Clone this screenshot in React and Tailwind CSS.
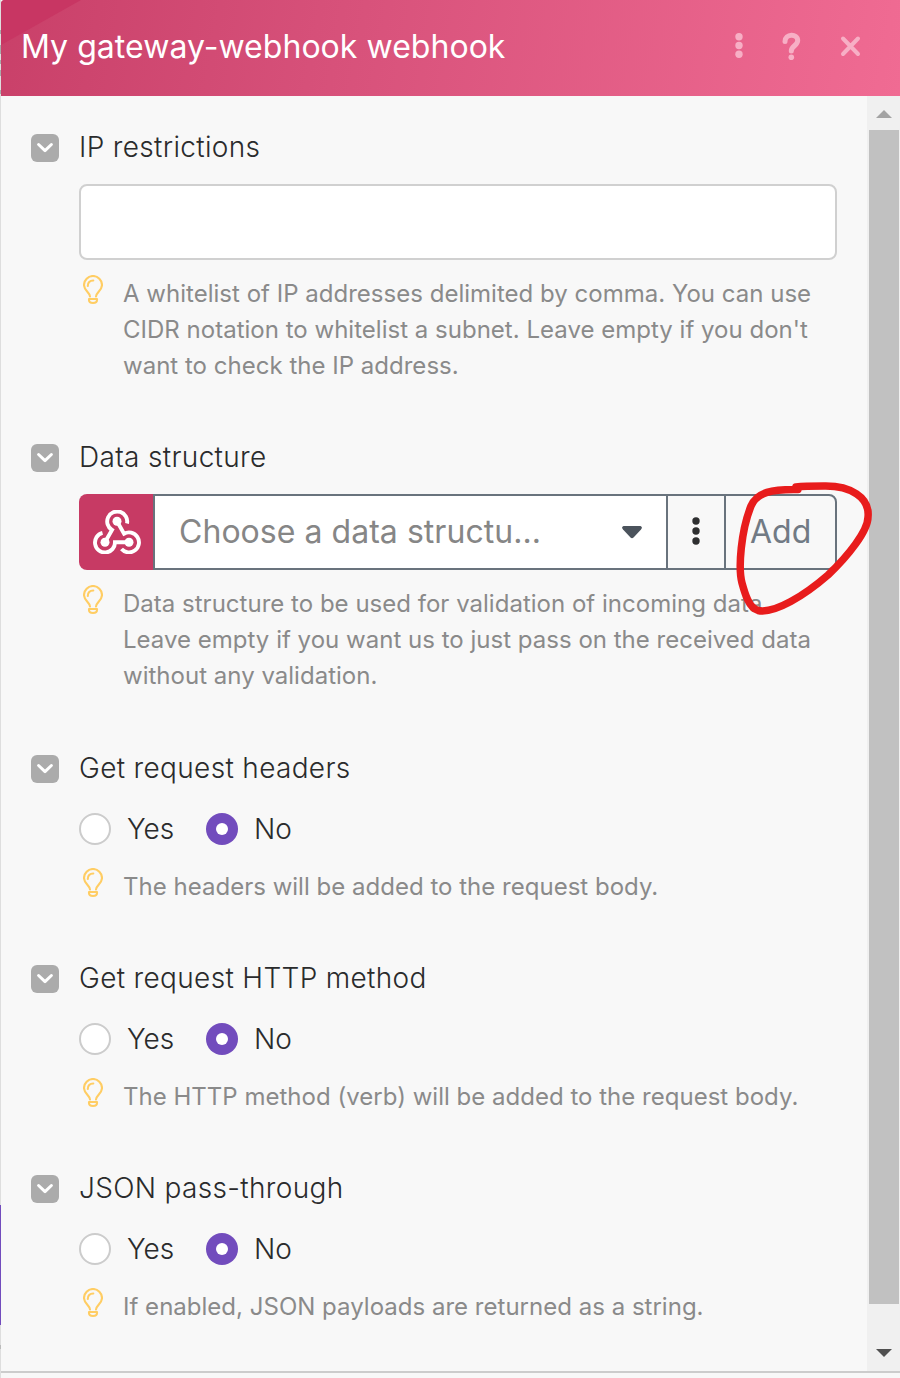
const Bulb = () => (
  <svg className="mt-[-1px] ml-[4px] mr-5 shrink-0" width="20" height="30" viewBox="0 0 20 30" fill="none" stroke="#ffcd63" strokeWidth="2.100">
    <path d="M7 21.500C6.500 17 1 15.500 1 10a9 9 0 0 1 18 0c0 5.500-5.500 7-6 11.500" strokeLinecap="round" />
    <path d="M4.800 11C4.600 7.500 6.800 5.500 10.300 5.500" strokeLinecap="round" />
    <path d="M6 24h8v1c0 4-8 4-8 0z" strokeLinejoin="round" />
  </svg>
);

const Toggle = () => (
  <button className="flex h-7 w-7 shrink-0 items-center justify-center rounded-[6px] bg-[#ababab]" aria-label="Toggle">
    <svg width="28" height="28" viewBox="0 0 28 28" fill="none" stroke="#fff" strokeWidth="3" strokeLinecap="round" strokeLinejoin="round">
      <path d="M7.600 10.500 14 16.600 20.400 10.500" />
    </svg>
  </button>
);

const Section = ({ title, className, children }) => (
  <section className={className}>
    <div className="flex h-[42px] items-center">
      <div className="mt-0.5 flex"><Toggle /></div>
      <h2 className="ml-5 text-[28px] leading-[42px] font-light tracking-[0.33px] text-[#2a2b2c]">{title}</h2>
    </div>
    <div className="ml-12">{children}</div>
  </section>
);

const Help = ({ lines }) => (
  <div className="flex">
    <Bulb />
    <p className="text-[24px] leading-9 tracking-[0.015px] whitespace-nowrap text-[#8a8a8a]">
      {lines.map((line) => (
        <span key={line} className="block">{line}</span>
      ))}
    </p>
  </div>
);

const YesNo = () => (
  <div className="flex h-8 items-center text-[28px] font-light text-[#2a2b2c]">
    <span className="h-8 w-8 rounded-full border-2 border-[#cccccc] bg-white" />
    <span className="ml-4 w-[79px]">Yes</span>
    <span className="flex h-8 w-8 items-center justify-center rounded-full bg-[#724cbd]">
      <span className="h-3 w-3 rounded-full bg-white" />
    </span>
    <span className="ml-4">No</span>
  </div>
);

const Hook = () => (
  <svg width="48" height="44" viewBox="0 0 48 44" fill="none" stroke="#fff" strokeWidth="3.900">
    <path d="M34 13.500A10 10 0 1 0 19 20L12 32.300" />
    <path d="M9.500 22.800A10 10 0 1 0 22 32.300H36" />
    <path d="M28.500 39A10 10 0 1 0 31 23.700L24 11.300" />
    <circle cx="24" cy="11.300" r="4.500" fill="#fff" stroke="none" />
    <circle cx="12" cy="32.300" r="4.500" fill="#fff" stroke="none" />
    <circle cx="36" cy="32.300" r="4.500" fill="#fff" stroke="none" />
  </svg>
);

export default function App() {
  return (
    <div className="relative flex h-[1378px] w-[900px] flex-col overflow-hidden bg-[#f8f8f8] font-['Inter',sans-serif]">
      <div className="flex min-h-0 flex-1">
        <div className="flex w-px shrink-0 flex-col bg-[#dedede]">
          <div className="mt-[30px] h-[4px] bg-[#aaaaaa]" />
          <div className="mt-[11px] h-[9px] bg-[#aaaaaa]" />
          <div className="mt-[6px] h-[4px] bg-[#aaaaaa]" />
          <div className="mt-[6px] h-[6px] bg-[#aaaaaa]" />
          <div className="mt-[14px] h-[4px] bg-[#aaaaaa]" />
          <div className="mt-[1111px] h-[120px] bg-[#724cbd]" />
          <div className="mt-[20px] h-[4px] bg-[#bbbbbb]" />
        </div>
        <div className="flex min-w-0 flex-1 flex-col">
          <header className="relative flex h-24 shrink-0 items-center overflow-hidden rounded-tl-[4px] bg-linear-[100deg,#c94069_0%,#d65079_35%,#f06b93_100%] pl-5">
            <svg className="absolute top-0 left-0" width="80" height="45" viewBox="0 0 80 45">
              <path d="M0 0H80L0 45Z" fill="#c83663" />
            </svg>
            <h1 className="relative -mt-[3px] text-[32px] tracking-[0.04px] whitespace-nowrap text-white">My gateway-webhook webhook</h1>
            <svg className="absolute top-[30px] right-9" width="130" height="34" viewBox="0 0 130 34" fill="none" stroke="#f7afc5" strokeLinecap="round">
              <g fill="#f7afc5" stroke="none">
                <circle cx="5" cy="6.700" r="3.700" />
                <circle cx="5" cy="15.500" r="3.700" />
                <circle cx="5" cy="24.200" r="3.700" />
                <circle cx="57.300" cy="27.200" r="2.800" />
              </g>
              <path d="M51 11.500C51 3.500 63.700 3.200 63.700 10.500C63.700 15.500 57.300 16 57.300 21" strokeWidth="5" />
              <path d="M109 8.500 124 24M124 8.500 109 24" strokeWidth="4" />
            </svg>
          </header>
          <div className="flex min-h-0 flex-1">
            <main className="w-[866px] pt-[30px] pl-[30px]">
              <Section title="IP restrictions" className="h-[310px]">
                <div className="mt-4 mb-4 h-[76px] w-[758px] rounded-[8px] border-2 border-[#d0d0d0] bg-white" />
                <Help lines={["A whitelist of IP addresses delimited by comma. You can use", "CIDR notation to whitelist a subnet. Leave empty if you don't", "want to check the IP address."]} />
              </Section>
              <Section title="Data structure" className="h-[311px]">
                <div className="mt-4 mb-4 flex h-[76px] w-[758px]">
                  <div className="flex w-[74px] items-center justify-center rounded-l-[8px] bg-[#c73a64] pl-0.5"><Hook /></div>
                  <div className="flex w-[515px] items-center border-2 border-[#69737d] bg-white pl-6 text-[32px] tracking-[0.04px] text-[#868686]">
                    <span className="w-[443px]">Choose a data structu...</span>
                    <svg width="20" height="13" viewBox="0 0 20 13"><path d="M1.500 0H18.500Q21 1 19 3.500L11.500 11.500Q10 13 8.500 11.500L1 3.500Q-1 1 1.500 0Z" fill="#4b535c" /></svg>
                  </div>
                  <div className="flex w-14 items-center justify-center border-y-2 border-[#69737d]">
                    <svg className="-mt-0.5" width="8" height="28" viewBox="0 0 8 28" fill="#2e2f30"><circle cx="4" cy="4" r="3.700" /><circle cx="4" cy="14" r="3.700" /><circle cx="4" cy="24" r="3.700" /></svg>
                  </div>
                  <div className="flex w-[113px] items-center rounded-r-[8px] border-2 border-[#69737d] pl-6 text-[32px] text-[#717a84]">Add</div>
                </div>
                <Help lines={["Data structure to be used for validation of incoming data.", "Leave empty if you want us to just pass on the received data", "without any validation."]} />
              </Section>
              {[
                ["Get request headers", "The headers will be added to the request body."],
                ["Get request HTTP method", "The HTTP method (verb) will be added to the request body."],
                ["JSON pass-through", "If enabled, JSON payloads are returned as a string."],
              ].map(([title, help]) => (
                <Section key={title} title={title} className="h-[210px]">
                  <div className="mt-6 mb-6"><YesNo /></div>
                  <Help lines={[help]} />
                </Section>
              ))}
            </main>
            <div className="flex w-[33px] shrink-0 flex-col items-center bg-[#f0f0f0]">
              <div className="flex h-[34px] shrink-0 items-center justify-center">
                <svg className="mt-0.5" width="16" height="8"><path d="M8 0 16 8H0Z" fill="#a3a3a3" /></svg>
              </div>
              <div className="h-[1174px] w-[30px] shrink-0 bg-[#c1c1c1]" />
              <svg className="mt-[45px]" width="16" height="8"><path d="M0 0H16L8 8Z" fill="#505050" /></svg>
            </div>
          </div>
          <div className="h-0.5 shrink-0 bg-[#cccccc]" />
          <div className="h-[5px] shrink-0" />
        </div>
      </div>
      <svg className="absolute top-[470px] left-[720px]" width="170" height="160" viewBox="0 0 170 160" fill="none" stroke="#e81c1c" strokeWidth="7.500" strokeLinecap="round" strokeLinejoin="round">
        <path d="M78 19.500C52 19 37 22 31 36C21 61 18 98 22 113C25 124 29 138 38 140.500C55 144 85 125 108 105C128 86 148 61 148 47C150 27 130 15.500 104 16C94 16 84 16 76 17" />
      </svg>
    </div>
  );
}
